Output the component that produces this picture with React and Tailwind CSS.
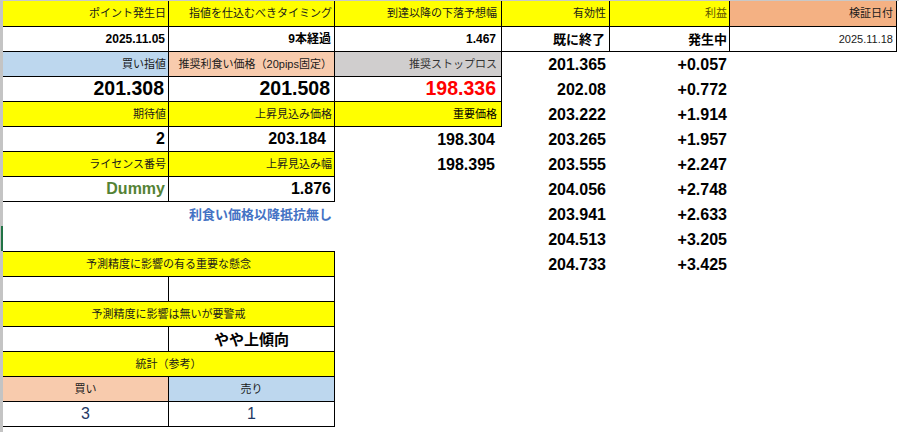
import React from "react";

const W1 = "w-[166px]";
const W2 = "w-[166px]";
const W3 = "w-[167px]";
const W4 = "w-[108px]";
const W5 = "w-[120px]";
const W6 = "w-[167px]";
const W12 = "w-[332px]";

const B = "border-r border-b border-black";
const R = "justify-end";
const CT = "justify-center";
const LBL = "text-[11px] text-[#1a1a1a]";
const YEL = "bg-[#ffff00]";
const NUM16 = "text-[16px] font-bold text-black";
const BIG = "text-[19.5px] font-bold text-black";

function C({ w, cls = "", children }) {
  return (
    <div className={`${w} h-full shrink-0 flex items-center whitespace-nowrap leading-none ${cls}`}>
      {children}
    </div>
  );
}

function Row({ h = "h-[25px]", children }) {
  return <div className={`flex ${h}`}>{children}</div>;
}

export default function App() {
  return (
    <div className="w-[899px] h-[432px] bg-white overflow-hidden font-['Liberation_Sans','Noto_Sans_CJK_JP',sans-serif]">
      <div className="h-px bg-[#c8c8c8]" />
      <div className="flex">
        <div className="w-[3px] bg-[#c4c4c4] flex flex-col shrink-0">
          <div className="h-[225px]" />
          <div className="h-[25px] w-[2px] ml-[1px] bg-[#217346]" />
          <div className="h-[181px]" />
        </div>
        <div className="flex flex-col">
          {/* Row 1 */}
          <Row h="h-[26px]">
            <C w={W1} cls={`${B} ${YEL} ${R} pr-[2px] ${LBL}`}>ポイント発生日</C>
            <C w={W2} cls={`${B} ${YEL} ${R} pr-[2px] ${LBL}`}>指値を仕込むべきタイミング</C>
            <C w={W3} cls={`${B} ${YEL} ${R} pr-[4px] ${LBL}`}>到達以降の下落予想幅</C>
            <C w={W4} cls={`${B} ${YEL} ${R} pr-[3px] ${LBL}`}>有効性</C>
            <C w={W5} cls={`${B} ${YEL} ${R} pr-[2px] text-[11px] text-[#5c5300]`}>利益</C>
            <C w={W6} cls={`${B} bg-[#f4b183] ${R} pr-[3px] ${LBL}`}>検証日付</C>
          </Row>
          {/* Row 2 */}
          <Row>
            <C w={W1} cls={`${B} ${R} pr-[3px] text-[12px] font-bold text-black`}>2025.11.05</C>
            <C w={W2} cls={`${B} ${R} pr-[3px] text-[12px] font-bold text-black`}>9本経過</C>
            <C w={W3} cls={`${B} ${R} pr-[5px] text-[12px] font-bold text-black`}>1.467</C>
            <C w={W4} cls={`${B} ${R} pr-[4px] text-[13px] font-bold text-black`}>既に終了</C>
            <C w={W5} cls={`${B} ${R} pr-[2px] text-[13px] font-bold text-black`}>発生中</C>
            <C w={W6} cls={`${B} ${R} pr-[3px] text-[11px] text-[#1a1a1a]`}>2025.11.18</C>
          </Row>
          {/* Row 3 */}
          <Row>
            <C w={W1} cls={`${B} bg-[#bdd7ee] ${R} pr-[2px] ${LBL}`}>買い指値</C>
            <C w={W2} cls={`${B} bg-[#f8cbad] ${R} pr-[2px] ${LBL}`}>推奨利食い価格（20pips固定）</C>
            <C w={W3} cls={`${B} bg-[#d0cece] ${R} pr-[4px] text-[11px] text-[#333]`}>推奨ストップロス</C>
            <C w={W4} cls={`${R} pr-[4px] ${NUM16}`}>201.365</C>
            <C w={W5} cls={`${R} pr-[3px] ${NUM16}`}>+0.057</C>
          </Row>
          {/* Row 4 */}
          <Row>
            <C w={W1} cls={`${B} ${R} pr-[4px] ${BIG}`}>201.308</C>
            <C w={W2} cls={`${B} ${R} pr-[4px] ${BIG}`}>201.508</C>
            <C w={W3} cls={`${B} ${R} pr-[5px] text-[19.5px] font-bold text-[#ff0000]`}>198.336</C>
            <C w={W4} cls={`${R} pr-[4px] ${NUM16}`}>202.08</C>
            <C w={W5} cls={`${R} pr-[3px] ${NUM16}`}>+0.772</C>
          </Row>
          {/* Row 5 */}
          <Row>
            <C w={W1} cls={`${B} ${YEL} ${R} pr-[2px] ${LBL}`}>期待値</C>
            <C w={W2} cls={`${B} ${YEL} ${R} pr-[2px] ${LBL}`}>上昇見込み価格</C>
            <C w={W3} cls={`${B} ${YEL} ${R} pr-[4px] text-[11px] text-black`}>重要価格</C>
            <C w={W4} cls={`${R} pr-[4px] ${NUM16}`}>203.222</C>
            <C w={W5} cls={`${R} pr-[3px] ${NUM16}`}>+1.914</C>
          </Row>
          {/* Row 6 */}
          <Row>
            <C w={W1} cls={`${B} ${R} pr-[3px] ${NUM16}`}>2</C>
            <C w={W2} cls={`${B} ${R} pr-[8px] ${NUM16}`}>203.184</C>
            <C w={W3} cls={`${R} pr-[7px] ${NUM16}`}>198.304</C>
            <C w={W4} cls={`${R} pr-[4px] ${NUM16}`}>203.265</C>
            <C w={W5} cls={`${R} pr-[3px] ${NUM16}`}>+1.957</C>
          </Row>
          {/* Row 7 */}
          <Row>
            <C w={W1} cls={`${B} ${YEL} ${R} pr-[2px] ${LBL}`}>ライセンス番号</C>
            <C w={W2} cls={`${B} ${YEL} ${R} pr-[2px] ${LBL}`}>上昇見込み幅</C>
            <C w={W3} cls={`${R} pr-[7px] ${NUM16}`}>198.395</C>
            <C w={W4} cls={`${R} pr-[4px] ${NUM16}`}>203.555</C>
            <C w={W5} cls={`${R} pr-[3px] ${NUM16}`}>+2.247</C>
          </Row>
          {/* Row 8 */}
          <Row>
            <C w={W1} cls={`${B} ${R} pr-[3px] text-[16px] font-bold text-[#548235]`}>Dummy</C>
            <C w={W2} cls={`${B} ${R} pr-[3px] ${NUM16}`}>1.876</C>
            <C w={W3} cls="" />
            <C w={W4} cls={`${R} pr-[4px] ${NUM16}`}>204.056</C>
            <C w={W5} cls={`${R} pr-[3px] ${NUM16}`}>+2.748</C>
          </Row>
          {/* Row 9 */}
          <Row>
            <C w={W12} cls={`${R} pr-[3px] text-[13px] font-bold text-[#4472c4]`}>利食い価格以降抵抗無し</C>
            <C w={W3} cls="" />
            <C w={W4} cls={`${R} pr-[4px] ${NUM16}`}>203.941</C>
            <C w={W5} cls={`${R} pr-[3px] ${NUM16}`}>+2.633</C>
          </Row>
          {/* Row 10 */}
          <Row>
            <C w={W12} cls="border-b border-black" />
            <C w={W3} cls="" />
            <C w={W4} cls={`${R} pr-[4px] ${NUM16}`}>204.513</C>
            <C w={W5} cls={`${R} pr-[3px] ${NUM16}`}>+3.205</C>
          </Row>
          {/* Row 11 */}
          <Row>
            <C w={W12} cls={`${B} ${YEL} ${CT} ${LBL}`}>予測精度に影響の有る重要な懸念</C>
            <C w={W3} cls="" />
            <C w={W4} cls={`${R} pr-[4px] ${NUM16}`}>204.733</C>
            <C w={W5} cls={`${R} pr-[3px] ${NUM16}`}>+3.425</C>
          </Row>
          {/* Row 12 */}
          <Row>
            <C w={W1} cls={B} />
            <C w={W2} cls={B} />
          </Row>
          {/* Row 13 */}
          <Row>
            <C w={W12} cls={`${B} ${YEL} ${CT} ${LBL}`}>予測精度に影響は無いが要警戒</C>
          </Row>
          {/* Row 14 */}
          <Row>
            <C w={W1} cls={B} />
            <C w={W2} cls={`${B} ${CT} text-[15px] font-bold text-black`}>やや上傾向</C>
          </Row>
          {/* Row 15 */}
          <Row>
            <C w={W12} cls={`${B} ${YEL} ${CT} ${LBL}`}>統計（参考）</C>
          </Row>
          {/* Row 16 */}
          <Row>
            <C w={W1} cls={`${B} bg-[#f8cbad] ${CT} ${LBL}`}>買い</C>
            <C w={W2} cls={`${B} bg-[#bdd7ee] ${CT} ${LBL}`}>売り</C>
          </Row>
          {/* Row 17 */}
          <Row>
            <C w={W1} cls={`${B} ${CT} text-[16px] text-[#1f3864]`}>3</C>
            <C w={W2} cls={`${B} ${CT} text-[16px] text-[#1f3864]`}>1</C>
          </Row>
        </div>
      </div>
    </div>
  );
}
